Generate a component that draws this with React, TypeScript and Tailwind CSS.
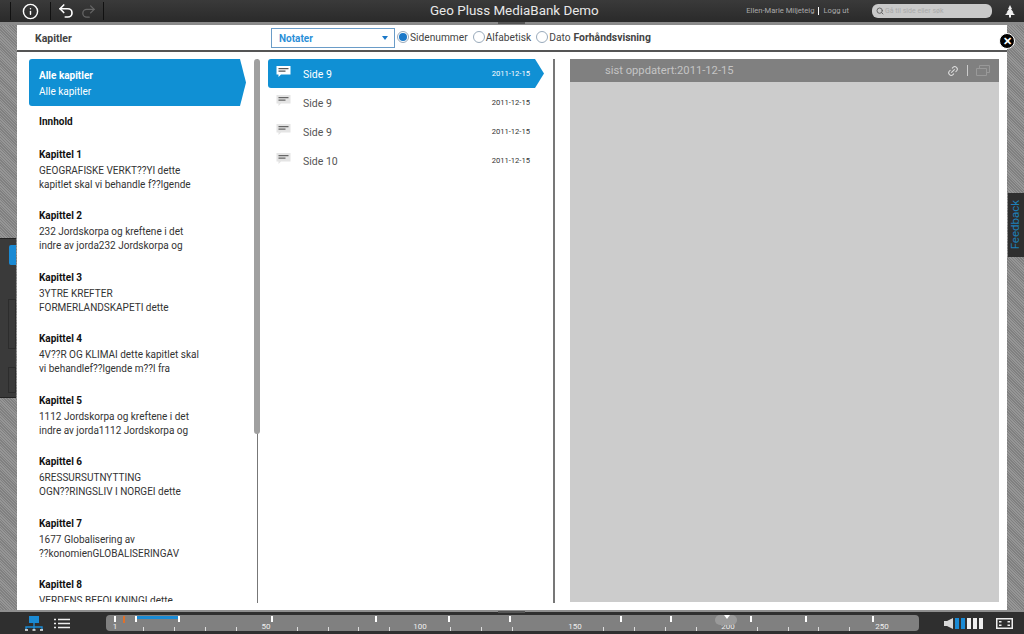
import { Info, Undo2, Redo2, Link2, Search } from 'lucide-react';

const chapters = [
  { title: 'Kapittel 1', lines: ['GEOGRAFISKE VERKT??YI dette', 'kapitlet skal vi behandle f??lgende'] },
  { title: 'Kapittel 2', lines: ['232 Jordskorpa og kreftene i det', 'indre av jorda232 Jordskorpa og'] },
  { title: 'Kapittel 3', lines: ['3YTRE KREFTER', 'FORMERLANDSKAPETI dette'] },
  { title: 'Kapittel 4', lines: ['4V??R OG KLIMAI dette kapitlet skal', 'vi behandlef??lgende m??l fra'] },
  { title: 'Kapittel 5', lines: ['1112 Jordskorpa og kreftene i det', 'indre av jorda1112 Jordskorpa og'] },
  { title: 'Kapittel 6', lines: ['6RESSURSUTNYTTING', 'OGN??RINGSLIV I NORGEI dette'] },
  { title: 'Kapittel 7', lines: ['1677 Globalisering av', '??konomienGLOBALISERINGAV'] },
  { title: 'Kapittel 8', lines: ['VERDENS BEFOLKNINGI dette', 'kapitlet skal vi behandle'] },
];

const notes = ['Side 9', 'Side 9', 'Side 9', 'Side 10'];
const majorTicks = [115, 136, 179, 272, 376, 449, 510, 621, 671, 751, 806, 873];
const minorTicks = [143, 174, 205, 236, 297, 328, 358, 389, 450, 481, 512, 603, 634, 665, 696, 757, 788, 818, 849];
const labels = [
  { x: 115, text: '1' },
  { x: 266, text: '50' },
  { x: 420, text: '100' },
  { x: 575, text: '150' },
  { x: 728, text: '200' },
  { x: 882, text: '250' },
];

function NoteIcon({ active }: { active: boolean }) {
  return (
    <svg width="15" height="13" viewBox="0 0 15 13" className="shrink-0">
      <path d="M0.5 1h14v8.5H5L2.5 12V9.5h-2z" fill={active ? '#ffffff' : '#e4e4e4'} />
      <path d="M2.5 3h10v1.3h-10zM2.5 5.4h7v1.3h-7z" fill={active ? '#555555' : '#666666'} />
    </svg>
  );
}

function Radio({ checked, label }: { checked?: boolean; label: string }) {
  return (
    <div className="flex items-center">
      <span className="w-[12px] h-[12px] rounded-full border border-[#9ab] bg-white flex items-center justify-center">
        {checked && <span className="w-[8px] h-[8px] rounded-full bg-[#1a78c8]" />}
      </span>
      <span className="text-[10.2px] text-[#444] ml-px">{label}</span>
    </div>
  );
}

function TopBar() {
  return (
    <header className="h-[25px] shrink-0 bg-gradient-to-b from-[#3a3a3a] to-[#2a2a2a] border-b-[3px] border-[#8a8a8a] flex items-center text-white relative">
      <span className="ml-[10px] w-px h-[18px] bg-[#111]" />
      <div className="w-[39px] flex justify-center">
        <Info size={17} strokeWidth={2} />
      </div>
      <span className="w-px h-[18px] bg-[#111]" />
      <div className="w-[52px] flex items-center justify-center gap-[5px]">
        <Undo2 size={18} strokeWidth={2.2} />
        <Redo2 size={17} strokeWidth={1.8} className="text-[#666]" />
      </div>
      <span className="w-px h-[18px] bg-[#111]" />
      <div className="absolute left-[430px] top-[1px] text-[13.4px] leading-[20px] text-[#e8e8e8]">Geo Pluss MediaBank Demo</div>
      <div className="ml-auto flex items-center text-[7.6px] text-[#aaa]">
        <span>Ellen-Marie Miljeteig</span>
        <span className="mx-[4px] w-px h-[8px] bg-white" />
        <span>Logg ut</span>
        <div className="ml-[23px] w-[120px] h-[14px] rounded-[6px] bg-[#c9c9c9] flex items-center pl-[4px] text-[7px] text-[#aaa]">
          <Search size={8} strokeWidth={3} className="text-[#666] mr-px" />
          Gå til side eller søk
        </div>
        <svg width="10" height="14" viewBox="0 0 10 14" className="ml-[13px] mr-[9px]">
          <path d="M5 1 7 5H6l2.5 3.5H7.5L10 11H6v2.5H4V11H0l2.5-2.5h-1L4 5H3z" fill="#f0f0f0" />
        </svg>
      </div>
    </header>
  );
}

function ChapterList() {
  return (
    <div className="w-[240px] shrink-0 h-[543px] overflow-hidden text-[10px] leading-[14px] text-[#333]">
      <div className="mr-[11px] ml-[12px] h-[47px] bg-[#1090d4] rounded-l-[3px] text-white pl-[10px] pt-[9px] [clip-path:polygon(0_0,calc(100%-6px)_0,100%_50%,calc(100%-6px)_100%,0_100%)]">
        <div className="font-bold pt-px">Alle kapitler</div>
        <div className="mt-[2px]">Alle kapitler</div>
      </div>
      <div className="ml-[22px] mt-[9px] font-bold text-[#111]">Innhold</div>
      <div className="ml-[22px] mt-[18.5px]">
        {chapters.map((c) => (
          <div key={c.title} className="h-[61.5px]">
            <div className="font-bold text-[#111] mb-[2px]">{c.title}</div>
            {c.lines.map((line) => (
              <div key={line} className="whitespace-nowrap">{line}</div>
            ))}
          </div>
        ))}
      </div>
    </div>
  );
}

function NotesList() {
  return (
    <div className="w-[297px] shrink-0 border-r-2 border-[#777] h-[544px] pl-[10px] pr-[10px] text-[#555]">
      {notes.map((n, i) => (
        <div
          key={i}
          className={`h-[29px] w-[276px] flex items-center pl-[8px] pr-[14px] ${
            i === 0
              ? 'bg-[#1090d4] text-white rounded-l-[3px] [clip-path:polygon(0_0,calc(100%-9px)_0,100%_50%,calc(100%-9px)_100%,0_100%)]'
              : ''
          }`}
        >
          <div className="-mt-[4px]">
            <NoteIcon active={i === 0} />
          </div>
          <span className="ml-[12px] text-[10.5px] mt-[3px]">{n}</span>
          <span className={`ml-auto text-[7.6px] mt-[1px] ${i === 0 ? 'text-white' : 'text-[#333]'}`}>2011-12-15</span>
        </div>
      ))}
    </div>
  );
}

function Preview() {
  return (
    <div className="ml-[15px] w-[429px] h-[543px] bg-[#cccccc]">
      <div className="h-[23px] bg-[#808080] flex items-center pl-[35px] pr-[9px] text-[11.2px] text-[#c4c4c4]">
        <span className="mt-[2px]">sist oppdatert:2011-12-15</span>
        <Link2 size={12} className="ml-auto text-[#ddd] -rotate-45" />
        <span className="mx-[8px] w-px h-[11px] bg-[#ccc]" />
        <svg width="14" height="11" viewBox="0 0 14 11">
          <path d="M3.5 3V.5h10v7H11M.5 3.5h10v7H.5z" fill="none" stroke="#999" />
        </svg>
      </div>
    </div>
  );
}

function TimeLine() {
  return (
    <footer className="h-[24px] shrink-0 bg-[#2f2f2f] border-t-[2px] border-[#8f8f8f] relative flex items-center">
      <svg width="18" height="15" viewBox="0 0 18 15" className="ml-[25px]">
        <rect x="4" y="0" width="10" height="7" fill="#1a8ad4" />
        <path d="M1 14v-3h16v3M9 7v7" fill="none" stroke="#1a8ad4" strokeWidth="1.4" />
        <path d="M0 14h3M7.5 14h3M15 14h3" stroke="#eee" strokeWidth="1.4" />
      </svg>
      <svg width="16" height="11" viewBox="0 0 16 11" className="ml-[11px]">
        <path d="M0 1.500h2M4 1.500h12M0 5.500h2M4 5.500h12M0 9.500h2M4 9.500h12" stroke="#eee" strokeWidth="1.5" />
      </svg>
      <div className="ml-[36px] w-[813px] h-[16px] -mt-px rounded-[4px] bg-[#808080] relative overflow-hidden text-[8px] leading-[9px] text-[#eee]">
        <span className="absolute top-[1px] left-[17px] w-[2px] h-[7px] bg-[#e0702a]" />
        <span className="absolute top-[1px] left-[30px] w-[43px] h-[3px] bg-[#1a8ad4]" />
        {majorTicks.map((x) => (
          <span key={x} className="absolute top-[1px] w-[2px] h-[6px] bg-white" style={{ left: x - 107 }} />
        ))}
        {minorTicks.map((x) => (
          <span key={x} className="absolute bottom-0 w-px h-[4px] bg-[#ddd]" style={{ left: x - 106 }} />
        ))}
        {labels.map((l) => (
          <span key={l.x} className="absolute bottom-0 -translate-x-1/2" style={{ left: l.x - 106 }}>{l.text}</span>
        ))}
        <span className="absolute left-[609px] top-0 w-[22px] h-[10px] rounded-full bg-[#9a9a9a]" />
        <span className="absolute left-[618px] top-0 border-x-[3px] border-t-[4px] border-x-transparent border-t-white" />
      </div>
      <svg width="9" height="11" viewBox="0 0 9 11" className="ml-[25px]">
        <path d="M0 3h3l6-3v11L3 8H0z" fill="#d8d8d8" />
      </svg>
      <div className="ml-[2px] flex gap-[2px]">
        <span className="w-[4px] h-[11px] bg-[#1a8ad4]" />
        <span className="w-[4px] h-[11px] bg-[#1a8ad4]" />
        <span className="w-[4px] h-[11px] bg-[#eee]" />
        <span className="w-[4px] h-[11px] bg-[#eee]" />
        <span className="w-[4px] h-[11px] bg-[#eee]" />
      </div>
      <svg width="17" height="11" viewBox="0 0 17 11" className="ml-[13px]">
        <rect x="0.75" y="0.75" width="15.500" height="9.500" fill="none" stroke="#eee" strokeWidth="1.500" />
        <path d="M3 3h2.500v1.500H3zM11.500 3H14v1.500h-2.500zM3 6.500h2.500V8H3zM11.500 6.500H14V8h-2.500z" fill="#eee" />
      </svg>
    </footer>
  );
}

export default function App() {
  return (
    <div className="relative w-[1024px] h-[634px] overflow-hidden flex flex-col font-['Roboto',sans-serif]">
      <TopBar />
      <div className="flex-1 min-h-0 px-[17px] bg-[repeating-linear-gradient(45deg,#808080_0,#808080_1px,#969696_1px,#969696_2px)]">
        <div className="h-full bg-white">
          <div className="h-[27px] border-b-2 border-[#555] flex items-center">
            <span className="ml-[18px] w-[236px] text-[10.5px] font-bold text-[#444] pt-[2px]">Kapitler</span>
            <div className="w-[124px] h-[20px] border border-[#6a9cc8] flex items-center justify-between pl-[7px] pr-[6px] mt-[1px]">
              <span className="text-[10px] font-bold text-[#2c8fd8]">Notater</span>
              <span className="border-x-[3px] border-t-[4px] border-x-transparent border-t-[#1a78c8]" />
            </div>
            <div className="ml-[2px] flex gap-[5px]">
              <Radio checked label="Sidenummer" />
              <Radio label="Alfabetisk" />
              <Radio label="Dato" />
            </div>
            <span className="ml-[3px] text-[10.4px] font-bold text-[#444] pt-[1px]">Forhåndsvisning</span>
          </div>
          <div className="flex mt-[7px] relative">
            <ChapterList />
            <span className="w-px h-[544px] bg-[#777]" />
            <span className="absolute left-[237px] top-0 w-[6px] h-[375px] rounded-[3px] bg-[#a0a0a0]" />
            <NotesList />
            <Preview />
          </div>
        </div>
      </div>
      <TimeLine />

      {/* grips on the bars */}
      <span className="absolute left-[498px] top-[22px] w-[27px] h-[2px] bg-[#555]" />
      <span className="absolute left-[498px] top-[611px] w-[27px] h-[2px] bg-[#555]" />
      {/* close button */}
      <div className="absolute left-[999px] top-[33px] w-[16px] h-[16px] rounded-full bg-black border border-white flex items-center justify-center text-white text-[11px] font-bold leading-none">✕</div>
      {/* feedback tab */}
      <div className="absolute left-[1008px] top-[193px] w-[16px] h-[64px] bg-[#2e2e2e] flex items-center justify-center">
        <span className="-rotate-90 text-[11.5px] text-[#1d7fb8]">Feedback</span>
      </div>
      {/* left side tab */}
      <div className="absolute left-0 top-[238px] w-[16px] h-[160px] bg-[#3a3a3a] border-t border-b border-[#222]">
        <span className="absolute left-[9px] top-[6px] w-[7px] h-[20px] rounded-l-[2px] bg-[#1a8ad4]" />
        <span className="absolute left-[8px] top-[60px] w-[8px] h-[50px] border border-[#2c2c2c]" />
        <span className="absolute left-[8px] top-[128px] w-[8px] h-[26px] border border-[#2c2c2c]" />
      </div>
    </div>
  );
}
